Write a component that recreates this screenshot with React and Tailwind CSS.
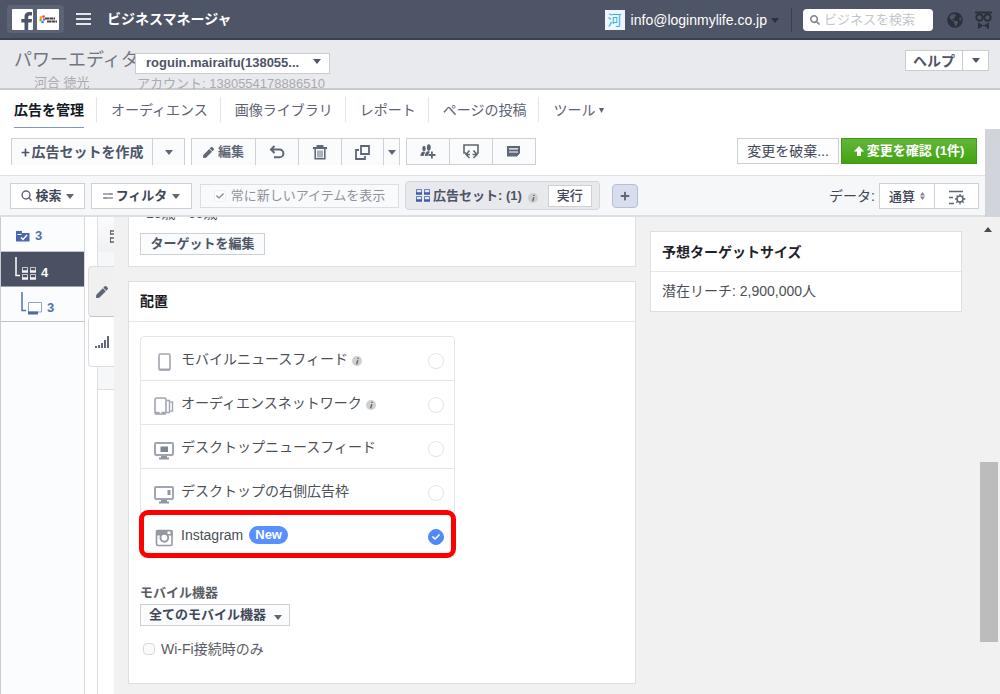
import React, { useState } from 'react';
import { FaPen, FaPlus, FaSearch, FaCheck, FaGlobeAmericas } from 'react-icons/fa';

/* ---------- Small shared pieces ---------- */

const Caret = ({ className = '' }) => (
    <svg viewBox="0 0 8 5" className={`w-2 h-[5px] shrink-0 ${className}`} fill="currentColor" aria-hidden="true">
        <path d="M0 0h8L4 5z" />
    </svg>
);

const InfoDot = ({ className = '' }) => (
    <svg viewBox="0 0 10 10" className={`w-[10px] h-[10px] shrink-0 ${className}`} aria-hidden="true">
        <circle cx="5" cy="5" r="5" fill="#cfcfcf" />
        <path d="M6 1.8v1.1M5.8 4.2L4.6 8.2" stroke="#666" strokeWidth="1.4" fill="none" />
    </svg>
);

const GridIcon = ({ color, className = '' }) => (
    <svg viewBox="0 0 14 13" className={`w-[14px] h-[13px] shrink-0 ${className}`} fill="none" stroke={color} aria-hidden="true">
        <path d="M.5.5h5v4h-5zM8.500.5h5v4h-5zM.5 7.500h5v4h-5zM8.500 7.500h5v4h-5z" strokeOpacity=".75" />
        <path d="M0 4.500h6M8 4.500h6M0 11.500h6M8 11.500h6" strokeWidth="2.400" />
    </svg>
);

/* ---------- Toolbar icons ---------- */

const UndoIcon = () => (
    <svg viewBox="0 0 16 14" className="w-4 h-[14px]" fill="none" stroke="currentColor" strokeWidth="2">
        <path d="M5.500 1L2 4.500 5.500 8M2 4.500h8.500a3.800 3.800 0 0 1 0 7.800H5" />
    </svg>
);

const TrashIcon = () => (
    <svg viewBox="0 0 14 15" className="w-[14px] h-[15px]" fill="none" stroke="currentColor">
        <path d="M0 3h14M4.500 2.500V1h5v1.500" strokeWidth="2" />
        <path d="M2.200 4v9.800h9.600V4" strokeWidth="1.600" />
        <path d="M5 5.500v7M7 5.500v7M9 5.500v7" />
    </svg>
);

const CopyIcon = () => (
    <svg viewBox="0 0 15 15" className="w-[15px] h-[15px]" fill="none" stroke="currentColor" strokeWidth="1.800">
        <path d="M6 1h8v8H6z" />
        <path d="M4 5H1v9h9v-3" />
    </svg>
);

const AudienceIcon = () => (
    <svg viewBox="0 0 16 15" className="w-4 h-[15px]" fill="currentColor">
        <ellipse cx="4" cy="4.500" rx="1.700" ry="2.800" />
        <path d="M.5 12c0-2.500.5-4 3.500-4.500l1 1-1.500 3.500z" />
        <ellipse cx="8.800" cy="3.500" rx="1.900" ry="3.200" />
        <path d="M4.800 12c.4-3 1-4.500 4-5l1 1-2.300 4z" />
        <path d="M11 7.500h1.800v2.600H15.500v1.800h-2.700v2.600H11v-2.600H8.500v-1.800H11z" />
    </svg>
);

const SwapIcon = () => (
    <svg viewBox="0 0 16 15" className="w-4 h-[15px]" fill="none" stroke="currentColor" strokeWidth="1.600">
        <path d="M3 9H1V1h14v8h-1" />
        <path d="M6.500 6.500L3 10.500l3.500 3.500M10.500 6.500l3.500 4-3.500 3.500M3.500 10.500h3.500M9.500 10.500h4" />
    </svg>
);

const NoteIcon = () => (
    <svg viewBox="0 0 14 13" className="w-[14px] h-[13px]">
        <path d="M0 1h13v10.500H0z" fill="currentColor" />
        <path d="M2 3.800h9M2 7h9" stroke="#fff" strokeWidth="1.200" />
        <path d="M9 12l4.500-4.500V12z" fill="#fff" />
        <path d="M9.500 11.500l3-3" stroke="currentColor" />
    </svg>
);

const ColumnsIcon = () => (
    <svg viewBox="0 0 18 15" className="w-[18px] h-[15px]" fill="none" stroke="currentColor" strokeWidth="1.600">
        <path d="M1 1.500h14M1 7.500h4M1 13.500h5" />
        <circle cx="12" cy="9" r="3" />
        <path d="M12 4v2M12 12v2.500M7 9h2M15 9h2.500M8.500 5.500l1.300 1.300M14.200 11.200l1.500 1.500M15.500 5.500l-1.300 1.300M9.800 11.200l-1.500 1.500" strokeWidth="1.300" />
    </svg>
);

/* ---------- Placement icons ---------- */

const PhoneIcon = () => (
    <svg viewBox="0 0 20 20" className="w-5 h-5" fill="none" stroke="#a0a6b1" strokeWidth="1.600">
        <rect x="5" y="2" width="11" height="16" rx="1.500" />
        <path d="M5 17.500h11" strokeWidth="2" />
    </svg>
);

const NetworkIcon = () => (
    <svg viewBox="0 0 20 20" className="w-5 h-5" fill="none" stroke="#a0a6b1" strokeWidth="1.600">
        <rect x="1" y="2" width="11" height="16" rx="1.500" />
        <path d="M1 17h4.500M7.500 17H12" strokeWidth="2.400" />
        <path d="M13 4.500h2.500v12H13M16.500 6h2v9h-2" strokeWidth="1.400" />
    </svg>
);

const DesktopFeedIcon = () => (
    <svg viewBox="0 0 20 20" className="w-5 h-5" fill="none" stroke="#a0a6b1" strokeWidth="2">
        <rect x="1" y="3" width="18" height="12" rx="1" />
        <path d="M6.500 6.500h7.500v5.500H6.500z" fill="#7f8593" stroke="none" />
        <path d="M5 18.500h10M7 17h6" stroke="#8f95a1" strokeWidth="1.800" />
    </svg>
);

const DesktopSideIcon = () => (
    <svg viewBox="0 0 20 20" className="w-5 h-5" fill="none" stroke="#a0a6b1" strokeWidth="2">
        <rect x="1" y="3" width="18" height="12" rx="1" />
        <path d="M13.500 6h3v5h-3z" fill="#8f95a1" stroke="none" />
        <path d="M5 18.500h10M7 17h6" stroke="#8f95a1" strokeWidth="1.800" />
    </svg>
);

const InstagramIcon = () => (
    <svg viewBox="0 0 20 20" className="w-5 h-5" fill="none">
        <rect x="2.500" y="2.500" width="15.500" height="15" rx="1.500" stroke="#9298a4" strokeWidth="1.600" />
        <path d="M2 2h16.500v5.500H2z" fill="#9298a4" />
        <path d="M13.500 3.500h3v2.500h-3z" fill="#fff" />
        <circle cx="10.300" cy="9.800" r="3.900" fill="#fff" stroke="#9298a4" strokeWidth="1.900" />
    </svg>
);

const placements = [
    { id: 'mobile-feed', label: 'モバイルニュースフィード', Icon: PhoneIcon, info: true },
    { id: 'audience-network', label: 'オーディエンスネットワーク', Icon: NetworkIcon, info: true },
    { id: 'desktop-feed', label: 'デスクトップニュースフィード', Icon: DesktopFeedIcon },
    { id: 'desktop-side', label: 'デスクトップの右側広告枠', Icon: DesktopSideIcon },
    { id: 'instagram', label: 'Instagram', Icon: InstagramIcon, isNew: true, highlight: true },
];

const tabs = ['広告を管理', 'オーディエンス', '画像ライブラリ', 'レポート', 'ページの投稿', 'ツール'];

/* ---------- Header ---------- */

const TopBar = () => (
    <header className="flex items-center h-10 bg-[#4e5566] border-b-2 border-[#3a4050] text-white">
        <div className="flex items-center gap-1 ml-[7px] px-[5px] h-7 rounded-sm bg-[#5b6375]">
            <svg viewBox="0 0 21 21" className="w-[21px] h-[21px]" role="img" aria-label="Facebook">
                <rect width="21" height="21" rx="1" fill="#fff" />
                <path d="M12.500 21v-7.500H9.300v-3.500h3.200V7.500c0-3 1.900-4.500 4.600-4.500h2.900v3.400h-2c-1.200 0-1.800.5-1.800 1.600v2H20l-.4 3.500h-3.400V21z" fill="#4e5566" />
            </svg>
            <svg viewBox="0 0 22 21" className="w-[22px] h-[21px]" role="img" aria-label="Login my life">
                <rect width="22" height="21" rx="1" fill="#fff" />
                <circle cx="4" cy="8.500" r="1.500" fill="#f7a800" />
                <circle cx="6.500" cy="7.500" r="1.300" fill="#e8432e" />
                <circle cx="3.500" cy="11" r="1.200" fill="#5bb531" />
                <circle cx="5.500" cy="13" r="1.300" fill="#2f7fd6" />
                <circle cx="7" cy="10.500" r="1.200" fill="#a14fc2" />
                <path d="M8 9.500h10M10 12.500h10" stroke="#4b4347" strokeWidth="2.200" strokeDasharray="4 .4" />
            </svg>
        </div>
        <button className="flex flex-col gap-[3px] ml-3 w-[15px]" aria-label="メニュー">
            <span className="h-[2px] w-full bg-[#e4e6ea]" />
            <span className="h-[2px] w-full bg-[#e4e6ea]" />
            <span className="h-[2px] w-full bg-[#e4e6ea]" />
        </button>
        <h1 className="ml-4 text-[14px] leading-5 font-bold">ビジネスマネージャ</h1>

        <div className="flex items-center ml-auto pt-[2px]">
            <span className="flex items-center justify-center w-5 h-5 bg-[#eef6fb] text-[#35b2e6] text-[14px] leading-5">河</span>
            <button className="flex items-center ml-[6px] text-[14px] leading-5">
                info@loginmylife.co.jp
                <Caret className="ml-1 text-[#2b303b]" />
            </button>
            <span className="w-px h-6 ml-3 bg-[#3a4050]" />
            <label className="flex items-center ml-[11px] w-[130px] h-[22px] px-[7px] rounded-sm bg-white">
                <FaSearch className="w-[10px] h-[10px] shrink-0 text-[#7f8693]" />
                <input
                    type="text"
                    aria-label="ビジネスを検索"
                    placeholder="ビジネスを検索"
                    className="ml-1 min-w-0 w-full text-[13px] leading-5 text-[#333] placeholder:text-[#c3c5c9] outline-none"
                />
            </label>
            <FaGlobeAmericas className="ml-[14px] w-4 h-4 text-[#2b303b]" />
            <svg viewBox="0 0 17 18" className="ml-3 mr-2 w-[17px] h-[18px]" fill="none" stroke="#2b303b" strokeWidth="2">
                <path d="M0 1.500h17" />
                <circle cx="4.500" cy="6.500" r="3.200" />
                <circle cx="12.500" cy="6.500" r="3.200" />
                <path d="M3.500 12l4 2.500-4 3zM13.500 12l-4 2.500 4 3zM7 14.500h3" fill="#2b303b" strokeWidth="1" />
            </svg>
        </div>
    </header>
);

const AccountBar = () => (
    <div className="flex items-start h-[50px] bg-[#e9eaed] border-b-2 border-[#c9cbcf]">
        <div className="ml-[14px] w-[121px]">
            <h2 className="mt-2 h-6 text-[18px] leading-6 text-[#6f7685] whitespace-nowrap">パワーエディタ</h2>
            <p className="pl-5 text-[13px] leading-[22px] text-[#a9abb0]">河合 徳光</p>
        </div>
        <div className="mt-[10px] flex flex-col">
            <div className="relative">
                <select
                    aria-label="アカウント"
                    className="appearance-none w-[195px] h-[21px] pl-[10px] pr-4 bg-white border border-[#c9ccd1] text-[13px] leading-[18px] font-bold text-[#4e5566] outline-none"
                >
                    <option>roguin.mairaifu(138055...</option>
                </select>
                <Caret className="absolute right-[9px] top-[9px] text-[#4e5566]" />
            </div>
            <p className="ml-[2px] text-[13px] leading-5 text-[#a9abb0] whitespace-nowrap">アカウント: 1380554178886510</p>
        </div>
        <div className="flex ml-auto mt-[10px] mr-[11px] h-[21px] bg-white border border-[#c9ccd1] text-[#4e5566]">
            <button className="w-14 text-[14px] leading-[18px] font-bold">ヘルプ</button>
            <button className="flex items-center justify-center w-[26px] border-l border-[#c9ccd1]" aria-label="ヘルプメニュー">
                <Caret />
            </button>
        </div>
    </div>
);

const TabBar = () => (
    <nav className="flex h-[39px] pl-[14px] text-[14px] leading-5">
        {tabs.map((tab, i) => (
            <div key={tab} className="flex items-start">
                {i > 0 && <span className="w-px h-[25px] mt-[7px] ml-3 mr-[14px] bg-[#e4e5e9]" />}
                <a
                    href="#"
                    className={
                        i === 0
                            ? 'h-[38px] pt-[10px] border-b border-[#7f97cc] font-bold text-[#141823]'
                            : 'flex items-center pt-[10px] text-[#5b6271]'
                    }
                >
                    {tab}
                    {tab === 'ツール' && (
                        <svg viewBox="0 0 5 5" className="w-[5px] h-[5px] ml-1" fill="currentColor">
                            <path d="M0 0h5L2.500 5z" />
                        </svg>
                    )}
                </a>
            </div>
        ))}
    </nav>
);

/* ---------- Toolbars ---------- */

const toolGroup = 'flex h-[27px] border border-[#ced0d4] divide-x divide-[#ced0d4] bg-[#fafbfc] text-[#5f6675]';
const toolButton = 'flex items-center justify-center';

const ActionBar = () => (
    <div className="flex items-start h-[46px] pt-[9px] pl-[11px] pr-[8px]">
        <div className={`${toolGroup} border-b-0`}>
            <button className={`${toolButton} w-[141px] text-[14px] font-bold text-[#4e5566] whitespace-nowrap`}>
                <FaPlus className="w-[9px] h-[9px] mr-[2px] shrink-0" />広告セットを作成
            </button>
            <button className={`${toolButton} w-[31px]`} aria-label="作成メニュー"><Caret /></button>
        </div>
        <div className={`${toolGroup} border-b-0 ml-[6px]`}>
            <button className={`${toolButton} w-16 text-[13px] font-bold`}>
                <FaPen className="w-[11px] h-[11px] mr-1" />編集
            </button>
            <button className={`${toolButton} w-[43px]`} aria-label="元に戻す"><UndoIcon /></button>
            <button className={`${toolButton} w-[43px]`} aria-label="削除"><TrashIcon /></button>
            <button className={`${toolButton} w-[42px]`} aria-label="複製"><CopyIcon /></button>
            <button className={`${toolButton} w-[15px]`} aria-label="複製メニュー"><Caret /></button>
        </div>
        <div className={`${toolGroup} ml-[6px]`}>
            <button className={`${toolButton} w-[43px]`} aria-label="オーディエンスを作成"><AudienceIcon /></button>
            <button className={`${toolButton} w-[43px]`} aria-label="置き換え"><SwapIcon /></button>
            <button className={`${toolButton} w-[42px]`} aria-label="メモ"><NoteIcon /></button>
        </div>
        <button className="ml-auto w-[102px] h-[26px] border border-[#ced0d4] bg-[#fdfdfe] text-[14px] leading-6 text-[#3f4757] whitespace-nowrap">
            変更を破棄...
        </button>
        <button className="flex items-center justify-center ml-[2px] w-[136px] h-[26px] border border-[#43971b] bg-linear-to-b from-[#62b637] to-[#42a30d] text-[13px] font-bold text-white whitespace-nowrap">
            <svg viewBox="0 0 10 10" className="w-[10px] h-[10px] mr-[3px]" fill="currentColor">
                <path d="M5 0l5 5.500H7V10H3V5.500H0z" />
            </svg>
            変更を確認 (1件)
        </button>
    </div>
);

const FilterBar = () => (
    <div className="flex items-center h-[42px] pl-[10px] pr-[6px] bg-[#f6f7f9] border-t border-b-2 border-t-[#dfe1e6] border-b-[#dcdfe4] text-[#3f4757]">
        <button className={`${toolButton} w-[75px] h-[26px] border border-[#ced0d4] bg-white text-[13px] font-bold`}>
            <svg viewBox="0 0 12 12" className="w-[11px] h-[11px] mr-[3px]" fill="none" stroke="#5f6675" strokeWidth="1.600">
                <circle cx="5.500" cy="5.500" r="4.300" />
                <path d="M8 8l3.500 3.500" />
            </svg>
            検索<Caret className="ml-1 mt-[2px] text-[#5f6675]" />
        </button>
        <button className={`${toolButton} ml-[6px] w-[101px] h-[26px] border border-[#ced0d4] bg-white text-[13px] font-bold`}>
            <svg viewBox="0 0 10 8" className="w-[10px] h-2 mr-[3px]" fill="none" stroke="#8d929d">
                <path d="M0 2h10M0 6h10" strokeWidth="1.400" />
                <path d="M7.500 1v2M2.500 5v2" strokeWidth="2" />
            </svg>
            フィルタ<Caret className="ml-[5px] mt-[2px] text-[#5f6675]" />
        </button>
        <button className={`${toolButton} ml-[8px] w-[199px] h-6 border border-[#dcdee3] bg-[#f9fafb] text-[13px] text-[#8d929d] whitespace-nowrap`}>
            <span className="flex items-center justify-center w-3 h-3 mr-[5px] bg-white border border-[#eceef1] rounded-sm">
                <FaCheck className="w-2 h-2" />
            </span>
            常に新しいアイテムを表示
        </button>
        <div className="flex items-center ml-[6px] h-[29px] pl-[10px] pr-[7px] border border-[#d3d6db] bg-[#e7e9ed] rounded-sm">
            <GridIcon color="#3f5ea8" />
            <span className="ml-[3px] text-[13px] leading-5 font-bold text-[#4e5566] whitespace-nowrap">広告セット: (1)</span>
            <InfoDot className="ml-[6px] mt-[5px]" />
            <button className="ml-[10px] w-11 h-[22px] border border-[#ced0d4] bg-white text-[13px] leading-5 font-medium">実行</button>
        </div>
        <button className={`${toolButton} ml-3 w-[26px] h-6 rounded-sm border border-[#b3bfdb] bg-[#d8deeb] text-[#5f6675]`} aria-label="追加">
            <FaPlus className="w-[10px] h-[10px]" />
        </button>
        <label htmlFor="range" className="ml-auto mr-1 text-[14px] leading-5">データ:</label>
        <div className="flex h-[26px] border border-[#ced0d4] bg-white">
            <div className="relative">
                <select id="range" className="appearance-none w-[54px] h-6 pl-[9px] text-[13px] leading-5 font-medium outline-none">
                    <option>通算</option>
                </select>
                <svg viewBox="0 0 5 8" className="absolute right-[9px] top-2 w-[5px] h-2" fill="#7f8593">
                    <path d="M0 3.500L2.500 0 5 3.500zM0 4.500L2.500 8 5 4.500z" />
                </svg>
            </div>
            <button className={`${toolButton} w-11 pt-1 border-l border-[#ced0d4] text-[#5f6675]`} aria-label="列の設定">
                <ColumnsIcon />
            </button>
        </div>
    </div>
);

/* ---------- Left side ---------- */

const TreeNav = () => (
    <nav className="w-[85px] shrink-0 bg-[#fbfcfe] border-l border-r border-l-[#c9ccd1] border-r-[#d6d8dd] text-[13px] leading-5 font-bold">
        <a href="#" className="flex items-center h-[35px] pt-1 pl-[15px] border-b border-[#bfc2c8] text-[#5470b0]">
            <svg viewBox="0 0 14 12" className="w-[14px] h-3 mr-[5px]">
                <path d="M0 1h6v2h7.500v8.500H0z" fill="#4a69ad" />
                <path d="M1.500 4.500l4-.1" stroke="#fff" />
                <path d="M5 7.500l2 2 4-4.500" stroke="#fff" strokeWidth="1.500" fill="none" />
            </svg>
            3
        </a>
        <a href="#" className="flex items-center h-[35px] pt-1 pl-[14px] bg-[#4a5163] border-b border-[#9ea2ab] text-white">
            <svg viewBox="0 0 5 20" className="w-[5px] h-5 mb-2 mr-[2px]" fill="none" stroke="#fff">
                <path d="M1 0v18.500h4" strokeWidth="1.500" />
            </svg>
            <GridIcon color="#f2f3f6" className="mr-[5px] mt-1" />
            <span className="mt-1">4</span>
        </a>
        <a href="#" className="flex items-center h-[35px] pt-1 pl-5 border-b border-[#bfc2c8] text-[#5470b0]">
            <svg viewBox="0 0 5 20" className="w-[5px] h-5 mb-2 mr-[2px]" fill="none" stroke="#5470b0">
                <path d="M1 0v18.500h4" strokeWidth="1.500" />
            </svg>
            <svg viewBox="0 0 14 13" className="w-[14px] h-[13px] mr-[5px] mt-1">
                <path d="M.5.5h13v9.500H.5z" fill="#fff" stroke="#8da2cf" />
                <path d="M0 9.500h10v3H0z" fill="#4a69ad" />
            </svg>
            <span className="mt-1">3</span>
        </a>
    </nav>
);

const PanelTabs = () => (
    <div className="flex flex-col w-[29px] shrink-0 bg-white">
        <div className="flex justify-end ml-3 h-[35px] pt-[13px] border-l border-[#dcdee3] bg-linear-to-b from-[#fbfbfb] to-[#f0f1f2]">
            <svg viewBox="0 0 4 13" className="w-1 h-[13px]" stroke="#5f6675" fill="none">
                <path d="M0 1h4M0 4h4M0 8h4M0 12h4" strokeWidth="1.500" />
                <path d="M.5 0v5M.5 7v6" />
            </svg>
        </div>
        <div className="ml-3 h-[14px] border-l border-[#dcdee3] bg-[#f6f7f8]" />
        <button className={`${toolButton} ml-[3px] h-[51px] rounded-l-sm border border-r-0 border-[#dcdee3] border-b-[#c3c6cb] bg-[#f0f0f0] text-[#5f6675]`} aria-label="編集">
            <FaPen className="w-3 h-3" />
        </button>
        <button className={`${toolButton} ml-[3px] h-[50px] rounded-l-sm border border-t-0 border-r-0 border-[#dcdee3] bg-white`} aria-label="レポート">
            <svg viewBox="0 0 14 12" className="w-[14px] h-3" fill="#5f6675">
                <path d="M0 10h2v2H0zM3 9h2v3H3zM6 7h2v5H6zM9 4h2v8H9zM12 0h2v12h-2z" />
            </svg>
        </button>
        <div className="ml-3 h-[23px] border-l border-b border-[#dcdee3] bg-[#f6f7f8]" />
        <div className="ml-3 flex-1 border-l border-[#dcdee3]" />
    </div>
);

/* ---------- Placement card ---------- */

const PlacementRow = ({ item, checked, onToggle }) => {
    const { id, label, Icon, info, isNew, highlight } = item;
    return (
        <label htmlFor={id} className="relative flex items-center h-11 pl-[13px] pr-[10px] text-[14px] leading-5 text-[#4b4f56] cursor-pointer">
            <span className="mt-[6px]"><Icon /></span>
            <span className="ml-[7px] whitespace-nowrap">{label}</span>
            {info && <InfoDot className="ml-1 mt-[5px]" />}
            {isNew && (
                <span className="ml-[6px] px-[6px] h-[18px] rounded-full bg-[#5890ff] text-[13px] leading-[18px] font-bold text-white">New</span>
            )}
            <span className="relative ml-auto mt-1 w-4 h-4">
                <input
                    id={id}
                    type="checkbox"
                    checked={checked}
                    onChange={onToggle}
                    className="peer block appearance-none w-4 h-4 rounded-full border border-[#e3e4e8] bg-white checked:bg-[#4f8af7] checked:border-[#4f8af7]"
                />
                <FaCheck className="absolute inset-1 w-2 h-2 text-white pointer-events-none" />
            </span>
            {highlight && <span className="absolute -inset-x-[2px] -top-[3px] -bottom-[1px] border-[5px] border-[#fe0000] rounded-[9px] pointer-events-none" />}
        </label>
    );
};

const PlacementCard = () => {
    const [selected, setSelected] = useState(['instagram']);
    const [wifiOnly, setWifiOnly] = useState(false);

    const toggle = (id) =>
        setSelected((prev) => (prev.includes(id) ? prev.filter((p) => p !== id) : [...prev, id]));

    return (
        <section className="bg-white border border-[#dddfe2]">
            <h3 className="h-10 pl-[11px] pt-[9px] border-b border-[#e6e7ea] text-[14px] leading-5 font-bold text-[#141823]">配置</h3>
            <div className="pl-[11px] pt-[14px] pb-[23px]">
                <div className="w-[315px] border border-[#e5e6e9] rounded-sm divide-y divide-[#e5e6e9]">
                    {placements.map((item) => (
                        <PlacementRow
                            key={item.id}
                            item={item}
                            checked={selected.includes(item.id)}
                            onToggle={() => toggle(item.id)}
                        />
                    ))}
                </div>

                <label htmlFor="devices" className="block mt-6 text-[13px] leading-[22px] font-bold text-[#5a5d63]">モバイル機器</label>
                <div className="relative w-[150px]">
                    <select
                        id="devices"
                        className="appearance-none block w-full h-[22px] pl-2 border border-[#ced0d4] bg-[#fafbfc] text-[13px] leading-5 font-bold text-[#3f4757] outline-none"
                    >
                        <option>全てのモバイル機器</option>
                    </select>
                    <Caret className="absolute right-2 top-[11px] text-[#5f6675]" />
                </div>
                <label className="flex items-center mt-3 text-[14px] leading-[22px] text-[#5a5d63]">
                    <input
                        type="checkbox"
                        checked={wifiOnly}
                        onChange={() => setWifiOnly(!wifiOnly)}
                        className="appearance-none ml-[3px] mr-[6px] w-3 h-3 rounded-sm border border-[#d9dadd] bg-[#fafafa] checked:bg-[#4f8af7]"
                    />
                    Wi-Fi接続時のみ
                </label>
            </div>
        </section>
    );
};

export default function App() {
    return (
        <div className="flex flex-col min-h-screen bg-white font-['Liberation_Sans','Noto_Sans_CJK_JP',sans-serif]">
            <TopBar />
            <AccountBar />
            <TabBar />

            <div className="flex">
                <div className="flex-1 min-w-0">
                    <ActionBar />
                    <FilterBar />
                </div>
                <div className="w-[15px] shrink-0 bg-[#d1d4da]" />
            </div>

            <div className="flex flex-1">
                <TreeNav />
                <PanelTabs />

                <main className="flex flex-1 items-start gap-[14px] pl-[14px] pr-[18px] pb-[9px] bg-[#f1f1f1] min-w-0">
                    <div className="flex-1 min-w-0">
                        <section className="h-[50px] mb-[14px] pl-[11px] bg-white border border-t-0 border-[#dddfe2]">
                            <div className="flex items-end h-[3px] pl-[6px] overflow-hidden text-[14px] leading-[14px] text-[#4b4f56]">18歳 - 65歳</div>
                            <button className="block mt-[13px] w-[125px] h-[22px] border border-[#ced0d4] bg-[#fafbfc] text-[13px] leading-5 font-bold text-[#4e5566] whitespace-nowrap">
                                ターゲットを編集
                            </button>
                        </section>
                        <PlacementCard />
                    </div>

                    <aside className="w-[312px] mt-[14px] shrink-0 bg-white border border-[#dddfe2] text-[#4b4f56]">
                        <h3 className="h-10 pl-[11px] pt-[10px] border-b border-[#e6e7ea] text-[14px] leading-5 font-bold text-[#1d2129]">予想ターゲットサイズ</h3>
                        <p className="h-[39px] pl-[11px] pt-[9px] text-[14px] leading-5">潜在リーチ: 2,900,000人</p>
                    </aside>
                </main>

                {/* Scroll track */}
                <div className="flex flex-col w-5 shrink-0 bg-[#f1f1f1] text-[#4a4a4a]">
                    <Caret className="mt-[10px] ml-1 rotate-180" />
                    <div className="mt-[230px] w-[18px] h-[180px] bg-[#bcbcbc]" />
                </div>
            </div>
        </div>
    );
}
